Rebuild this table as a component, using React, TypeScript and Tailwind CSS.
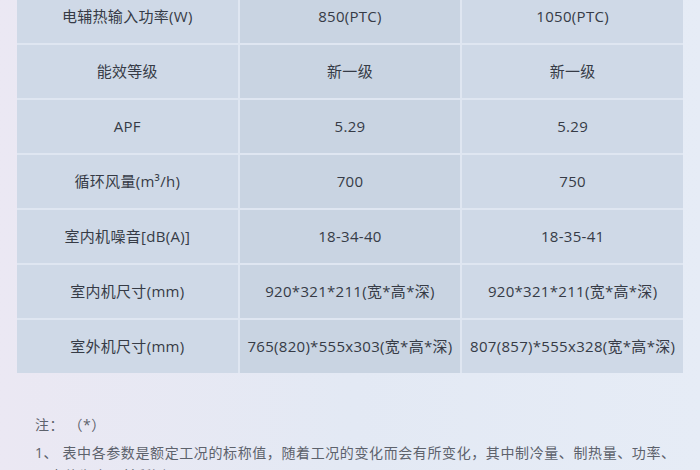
export default function App() {
  const rows = [
    ["电辅热输入功率(W)", "850(PTC)", "1050(PTC)"],
    ["能效等级", "新一级", "新一级"],
    ["APF", "5.29", "5.29"],
    ["循环风量(m³/h)", "700", "750"],
    ["室内机噪音[dB(A)]", "18-34-40", "18-35-41"],
    ["室内机尺寸(mm)", "920*321*211(宽*高*深)", "920*321*211(宽*高*深)"],
    ["室外机尺寸(mm)", "765(820)*555x303(宽*高*深)", "807(857)*555x328(宽*高*深)"],
  ];

  return (
    <div
      className="w-[700px] h-[470px] overflow-hidden bg-gradient-to-r from-[#ebe8f3] via-[#e3e9f4] to-[#e6ecf6] text-[#363b46]"
      style={{ fontFamily: '"Open Sans", "Noto Sans CJK SC", sans-serif' }}
    >
      {/* spec table */}
      <div className="mt-[-10px] mx-[17px] grid grid-cols-3 gap-[2px] bg-[#dfe6f1]">
        {rows.map((row, i) =>
          row.map((cell, j) => (
            <div
              key={`${i}-${j}`}
              className={`h-[53px] flex items-center justify-center text-[15px] tracking-[0.3px] whitespace-nowrap ${
                j === 1 ? "bg-[#c9d4e2]" : "bg-[#cfd9e7]"
              }`}
            >
              {cell}
            </div>
          ))
        )}
      </div>

      {/* notes */}
      <div className="px-[35px] pt-[38px] text-[14px] text-[#5d626c] leading-[27px] tracking-[0.6px]">
        <p>注：&nbsp;（*）</p>
        <p className="mt-[1px] whitespace-nowrap">
          1、 表中各参数是额定工况的标称值，随着工况的变化而会有所变化，其中制冷量、制热量、功率、
        </p>
        <p className="whitespace-nowrap leading-[20px]">噪声值为出厂前所测。</p>
      </div>
    </div>
  );
}
